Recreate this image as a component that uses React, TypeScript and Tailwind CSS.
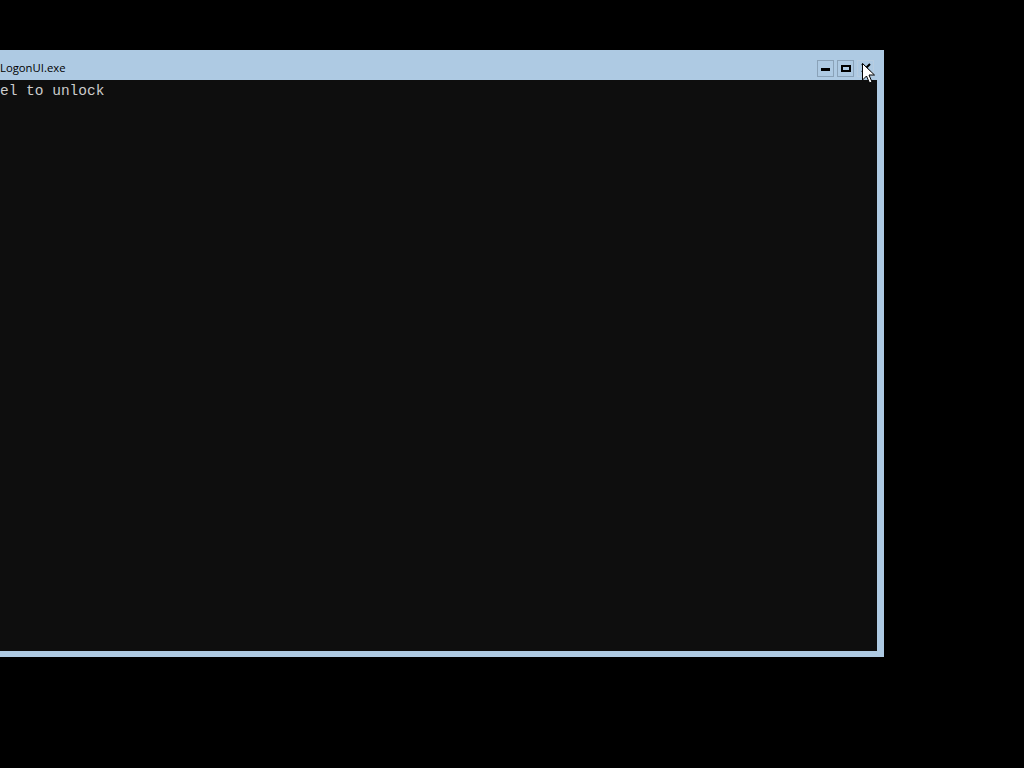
import React from "react";

export default function App() {
  return (
    <div className="w-[1024px] h-[768px] bg-black overflow-hidden relative">
      <div className="pt-[50px]">
        <div className="w-[884px] h-[607px] bg-[#aecae3] flex flex-col">
          <div className="h-[30px] flex items-center justify-between pr-[10px]">
            <span
              className="text-[11.3px] text-black pt-[7px]"
              style={{ fontFamily: '"Open Sans", "Noto Sans", sans-serif' }}
            >
              LogonUI.exe
            </span>
            <div className="flex gap-[3px] pt-[6px]">
              <div className="w-[17px] h-[17px] border border-[#8aa2b8] flex items-center justify-center">
                <div className="w-[9px] h-[3px] bg-black mt-[2px]" />
              </div>
              <div className="w-[17px] h-[17px] border border-[#8aa2b8] flex items-center justify-center">
                <div className="w-[10px] h-[7px] border-2 border-black" />
              </div>
              <div className="w-[17px] h-[17px] border border-[#b8cde0] flex items-center justify-center">
                <svg width="10" height="10" viewBox="0 0 10 10">
                  <path d="M1 1 L9 9 M9 1 L1 9" stroke="#000" strokeWidth="2" />
                </svg>
              </div>
            </div>
          </div>
          <div className="flex-1 bg-[#0e0e0e] mr-[7px] mb-[6px]">
            <div
              className="text-[14.5px] leading-[18px] text-[#cccccc] pt-[2px] whitespace-pre"
              style={{ fontFamily: '"Liberation Mono", "DejaVu Sans Mono", monospace' }}
            >
              el to unlock
            </div>
          </div>
        </div>
      </div>
      <svg
        className="absolute left-[862px] top-[63px]"
        width="14"
        height="22"
        viewBox="0 0 14 22"
      >
        <path
          d="M0.5 0.5 L0.5 17 L4.5 13 L7.5 20 L10 19 L7 12 L12.5 12 Z"
          fill="#fff"
          stroke="#000"
          strokeWidth="1"
        />
      </svg>
    </div>
  );
}
